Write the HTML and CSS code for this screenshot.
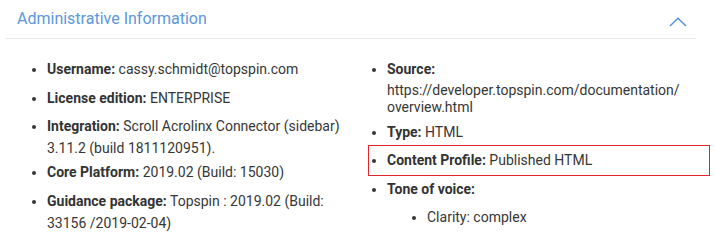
FILE: index.html
```html
<!DOCTYPE html>
<html lang="en">
<head>
<meta charset="utf-8">
<title>Administrative Information</title>
<link rel="stylesheet" href="styles.css">
</head>
<body>
<section class="panel">
  <header class="panel-header">
    <h2 class="panel-title">Administrative Information</h2>
    <svg class="chevron" width="18" height="10" viewBox="0 0 18 10" aria-hidden="true">
      <polyline points="1,9 9,1.2 17,9" fill="none" stroke="#4f8fdc" stroke-width="1.4"/>
    </svg>
  </header>
  <div class="panel-body">
    <ul class="info-list info-left">
      <li><b>Username:</b> cassy.schmidt@topspin.com</li>
      <li><b>License edition:</b> ENTERPRISE</li>
      <li class="tight"><b>Integration:</b> Scroll Acrolinx Connector (sidebar) 3.11.2 (build 1811120951).</li>
      <li><b>Core Platform:</b> 2019.02 (Build: 15030)</li>
      <li><b>Guidance package:</b> Topspin : 2019.02 (Build: 33156 /2019-02-04)</li>
    </ul>
    <ul class="info-list info-right">
      <li class="source"><b>Source:</b>
        <div class="url">https://developer.topspin.com/documentation/<wbr>overview.html</div>
      </li>
      <li><b>Type:</b> HTML</li>
      <li class="highlight"><b>Content Profile:</b> Published HTML</li>
      <li><b>Tone of voice:</b>
        <ul class="sub-list">
          <li>Clarity: complex</li>
        </ul>
      </li>
    </ul>
  </div>
</section>
</body>
</html>
```
FILE: styles.css
```css
html, body {
  margin: 0;
  padding: 0;
  background: #ffffff;
}

body {
  font-family: Roboto, "Liberation Sans", Arial, sans-serif;
  font-size: 14px;
  color: #363636;
  width: 715px;
  height: 251px;
  overflow: hidden;
}

.panel-header {
  display: flex;
  align-items: center;
  justify-content: space-between;
  height: 38px;
  margin: 0 19px 0 6px;
  border-bottom: 1px solid #e6e6e6;
  box-sizing: content-box;
}

.panel-title {
  margin: 0;
  padding: 0 0 2px 11px;
  font-size: 16px;
  font-weight: 400;
  color: #5b97dc;
}

.chevron {
  display: block;
  margin: 0 9px 0 0;
  position: relative;
  top: 3px;
}

.panel-body {
  display: grid;
  grid-template-columns: 345px 1fr;
  align-items: start;
}

.info-list {
  list-style: disc;
  margin: 19px 0 0 0;
  line-height: 22px;
}

.info-left {
  padding: 0 0 0 47px;
}

.info-right {
  padding: 0 0 0 42px;
}

.info-list li {
  margin: 0 0 6.5px 0;
}

.info-list b {
  font-weight: 700;
  color: #333333;
}

.info-list li.tight {
  margin-bottom: 2px;
}

.info-list li.source {
  margin-bottom: 4.5px;
}

.url {
  line-height: 17px;
  margin-top: 2px;
}

.info-list li.highlight {
  position: relative;
  margin: 2px 0 7px 0;
}

.info-list li.highlight::after {
  content: "";
  position: absolute;
  top: -4.5px;
  bottom: -4.5px;
  left: -19px;
  right: 5px;
  border: 1px solid #e3242b;
  pointer-events: none;
}

.sub-list {
  list-style: disc;
  margin: 6px 0 0 0;
  padding: 0 0 0 40px;
}
```
